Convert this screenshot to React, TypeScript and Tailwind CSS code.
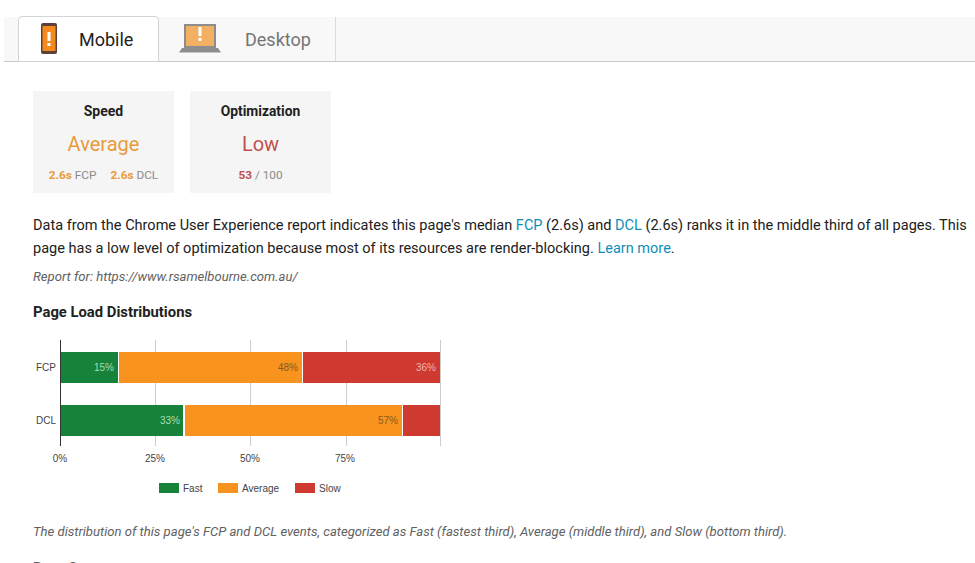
export default function App() {
  return (
    <div className="h-[563px] w-[975px] overflow-hidden bg-white font-['Roboto',sans-serif] text-[#212121]">
      {/* Tabs */}
      <div className="ml-1 mt-[17px] flex h-[45px] border-b border-[#c8c8c8] bg-[#f8f8f8]">
        <div className="ml-3.5 -mt-px flex h-[46px] w-[141px] items-center rounded-t-sm border border-[#d4d4d4] bg-white">
          <svg width="16" height="32" viewBox="0 0 16 32" className="ml-[22px]">
            <rect x="0" y="0" width="16" height="31" rx="2" fill="#5d4037" />
            <rect x="1.500" y="3" width="13" height="25" fill="#f48a1d" />
            <rect x="6.500" y="9" width="3" height="9" fill="#fff" />
            <rect x="6.500" y="20" width="3" height="3" fill="#fff" />
          </svg>
          <span className="ml-[22px] pt-px text-lg">Mobile</span>
        </div>
        <div className="flex w-[177px] items-center border-r border-[#dcdcdc]">
          <svg width="42" height="30" viewBox="0 0 42 30" className="ml-5">
            <rect x="5" y="0" width="32" height="24" fill="#8d8d8d" />
            <rect x="7" y="2" width="28" height="20" fill="#f4b062" />
            <rect x="19.500" y="3" width="3" height="9" fill="#fff" />
            <rect x="19.500" y="14" width="3" height="3" fill="#fff" />
            <path d="M3 24h36l3 4.500H0z" fill="#8d8d8d" />
          </svg>
          <span className="ml-6 pt-px text-lg text-[#757575]">Desktop</span>
        </div>
      </div>

      <div className="px-[33px]">
        {/* Summary cards */}
        <div className="mt-[29px] flex gap-4">
          <div className="flex h-[102px] w-[141px] flex-col items-center bg-[#f5f5f5] pt-3">
            <div className="text-sm font-bold leading-4">Speed</div>
            <div className="mt-[11px] text-xl leading-7 text-[#e89a3c]">Average</div>
            <div className="mt-[9px] flex gap-[14px] text-[11.800px] leading-4 text-[#8a8a8a]">
              <span><b className="text-[#e89a3c]">2.6s</b> FCP</span>
              <span><b className="text-[#e89a3c]">2.6s</b> DCL</span>
            </div>
          </div>
          <div className="flex h-[102px] w-[141px] flex-col items-center bg-[#f5f5f5] pt-3">
            <div className="text-[13.800px] font-bold leading-4">Optimization</div>
            <div className="mt-[11px] text-xl leading-7 text-[#c0504d]">Low</div>
            <div className="mt-[9px] text-[11.800px] leading-4 text-[#8a8a8a]">
              <b className="text-[#c0504d]">53</b> / 100
            </div>
          </div>
        </div>

        {/* Description */}
        <p className="mt-[21px] w-[942px] text-[14.520px] leading-[23px]">
          Data from the Chrome User Experience report indicates this page's median{" "}
          <span className="text-[#0f8fb8]">FCP</span> (2.6s) and{" "}
          <span className="text-[#0f8fb8]">DCL</span> (2.6s) ranks it in the middle third of all pages. This page has a low level of optimization because most of its resources are render-blocking.{" "}
          <span className="text-[#0f8fb8]">Learn more</span>.
        </p>
        <p className="mt-[9px] text-[13.100px] italic leading-4 text-[#616161]">
          Report for: https://www.rsamelbourne.com.au/
        </p>

        <h2 className="mt-[18px] text-[14.800px] font-bold leading-[18px]">Page Load Distributions</h2>

        {/* Chart */}
        <svg width="440" height="170" viewBox="0 0 440 170" className="-ml-[13px] mt-[19px] font-['Liberation_Sans',sans-serif]">
          <g stroke="#cccccc" strokeWidth="1">
            <line x1="135.500" y1="0" x2="135.500" y2="106" />
            <line x1="230.500" y1="0" x2="230.500" y2="106" />
            <line x1="326.500" y1="0" x2="326.500" y2="106" />
            <line x1="420.500" y1="0" x2="420.500" y2="106" />
          </g>
          <line x1="40.500" y1="0" x2="40.500" y2="106" stroke="#333333" />
          <rect x="41" y="12" width="57" height="31" fill="#178239" />
          <rect x="99" y="12" width="183" height="31" fill="#f7931e" />
          <rect x="283" y="12" width="137" height="31" fill="#cf3a30" />
          <rect x="41" y="65" width="122" height="31" fill="#178239" />
          <rect x="165" y="65" width="217" height="31" fill="#f7931e" />
          <rect x="383" y="65" width="37" height="31" fill="#cf3a30" />
          <g fontSize="10">
            <text x="94" y="31" textAnchor="end" fill="#a8dcb4">15%</text>
            <text x="278" y="31" textAnchor="end" fill="#8a5a20">48%</text>
            <text x="416" y="31" textAnchor="end" fill="#eeb4ae">36%</text>
            <text x="160" y="84" textAnchor="end" fill="#a8dcb4">33%</text>
            <text x="378" y="84" textAnchor="end" fill="#8a5a20">57%</text>
            <text x="36" y="31" textAnchor="end" fill="#444444">FCP</text>
            <text x="36" y="84" textAnchor="end" fill="#444444">DCL</text>
            <g fill="#444444" textAnchor="middle">
              <text x="40" y="122">0%</text>
              <text x="135" y="122">25%</text>
              <text x="230" y="122">50%</text>
              <text x="325" y="122">75%</text>
            </g>
            <rect x="139" y="143" width="20" height="10" fill="#178239" />
            <text x="163" y="152" fill="#444444">Fast</text>
            <rect x="198" y="143" width="20" height="10" fill="#f7931e" />
            <text x="222" y="152" fill="#444444">Average</text>
            <rect x="275" y="143" width="20" height="10" fill="#cf3a30" />
            <text x="299" y="152" fill="#444444">Slow</text>
          </g>
        </svg>

        <p className="mt-[14px] text-[13.100px] italic leading-4 text-[#616161]">
          The distribution of this page's FCP and DCL events, categorized as Fast (fastest third), Average (middle third), and Slow (bottom third).
        </p>
        <h2 className="mt-[19px] text-sm font-bold leading-[18px] text-[#616161]">Page Stats</h2>
      </div>
    </div>
  );
}
